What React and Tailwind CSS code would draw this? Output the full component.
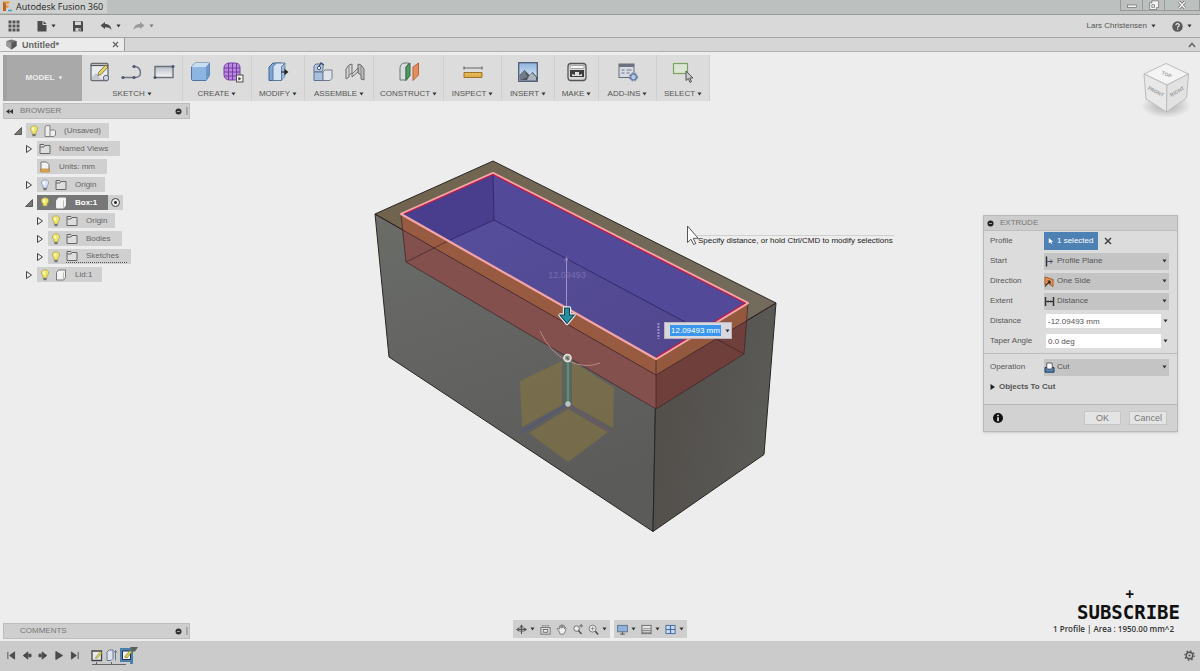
import React from "react";

function Caret({ className = "fill-[#333]" }) {
  return (
    <svg viewBox="0 0 6 5" className={`h-[4px] w-[5px] shrink-0 ${className}`} aria-hidden="true">
      <path d="M0.5 0.5h5L3 4.5z" />
    </svg>
  );
}

function Icon({ size = "h-6 w-6", box = 24, children }) {
  return (
    <svg viewBox={`0 0 ${box} ${box}`} className={`shrink-0 ${size}`} fill="none" aria-hidden="true">
      {children}
    </svg>
  );
}

/* ---------- toolbar icons ---------- */

const icons = {
  sketch: (
    <Icon>
      <rect x="3" y="3.500" width="17" height="17" rx="1" fill="#e9ecef" stroke="#6a6d72" strokeWidth="1.300" />
      <path d="M3 5.500h17" stroke="#555" strokeWidth="1.200" />
      <path d="M4 17l4-4 5 6H4z" fill="#c3c9d1" />
      <path d="M10.500 12.500l7-7.500 2.500 2-7 7.500-3.200 1z" fill="#e3d36d" stroke="#6d6330" strokeWidth=".8" />
      <circle cx="18" cy="18" r="2.700" fill="#cfd4df" stroke="#666b7a" />
    </Icon>
  ),
  line: (
    <Icon>
      <path d="M3 17.500h12c8 0 6.500-10 0-11h-1" stroke="#6f7787" strokeWidth="1.500" />
      <circle cx="3" cy="17.500" r="1.600" fill="#4a5575" />
      <circle cx="14" cy="17.500" r="1.600" fill="#4a5575" />
      <circle cx="14" cy="6.500" r="1.600" fill="#4a5575" />
    </Icon>
  ),
  rect: (
    <Icon>
      <path d="M3 6.500h18v11H3z" fill="url(#silver)" stroke="#6d7078" strokeWidth="1.400" />
      <circle cx="21" cy="6.500" r="1.500" fill="#4a5575" />
      <circle cx="3" cy="17.500" r="1.500" fill="#4a5575" />
    </Icon>
  ),
  box: (
    <Icon>
      <path d="M2.500 7l3.500-4h14.500v12.500L17 20.500H3.500l-1-1z" fill="#8db5e2" stroke="#53749f" strokeWidth="1" />
      <path d="M2.500 7L6 3h14.500L17 7z" fill="#c9def3" />
      <path d="M17 7l3.500-4v12.500L17 20.500z" fill="#6d97ca" />
    </Icon>
  ),
  form: (
    <Icon>
      <path d="M3 8c0-3 2-5 6-5h4c5 0 6 2 6 5v6c0 4-2 6-6 6H9c-4 0-6-2-6-6z" fill="#ba8ae0" stroke="#7540a0" />
      <path d="M3 8h16M3 12h16M3.500 16h15M7.500 3v17M11.500 3v17M15.500 3.500v16" stroke="#70359e" strokeWidth=".9" />
      <rect x="15.500" y="15" width="6.500" height="7" fill="#eee" stroke="#555" />
      <path d="M17.500 17v3.500l2.700-1.800z" fill="#333" />
    </Icon>
  ),
  modify: (
    <Icon>
      <path d="M3 7l4-4h8l-3 3v14.500H3z" fill="#7da6d7" stroke="#46658d" />
      <path d="M7 6.500L10.500 3H19l-3.500 4v13.500H7z" fill="#d2e2f3" stroke="#5c789a" />
      <path d="M15.500 7L19 3v13l-3.500 4.500z" fill="#9bbbdc" stroke="#5c789a" strokeWidth=".7" />
      <path d="M15 12h4M19 10l2.500 2-2.500 2z" stroke="#222" strokeWidth="1.200" fill="#222" />
    </Icon>
  ),
  assembleA: (
    <Icon>
      <path d="M3 6l2-2h7v6l-2 2H3z" fill="#b8c8dd" stroke="#60718c" />
      <path d="M3 12h9v8.500H3z" fill="#a8c1de" stroke="#60718c" />
      <path d="M12 12l2-2h7v8.500l-2 2h-7z" fill="#e1e5eb" stroke="#767b88" />
      <path d="M7 8l3-5 3 2" stroke="#3d5278" strokeWidth="1.300" />
      <circle cx="8" cy="8" r="1.700" fill="#f3f5fa" stroke="#3d5278" />
    </Icon>
  ),
  assembleB: (
    <Icon>
      <path d="M3 19V9l3-4 3-1v9l-3 2v2z" fill="#d4d4d4" stroke="#6c6c6c" />
      <path d="M21 20V9l-3-4-3-1v9l3 2v4z" fill="#bababa" stroke="#6c6c6c" />
      <path d="M9 14l6-6v4l-6 5z" fill="#cfcfcf" stroke="#6c6c6c" strokeWidth=".9" />
      <path d="M6 6v9M18 6v9" stroke="#8a8a8a" />
    </Icon>
  ),
  construct: (
    <Icon>
      <path d="M3 20V8c0-3 2-5 5-5h4l-3 4v13z" fill="#d9dde0" stroke="#70767a" />
      <path d="M9 7l4-4v12.500L9 20.500z" fill="#4f9a62" stroke="#376b45" />
      <path d="M16 7l5.500-4v12L16 20.500z" fill="#e58f60" stroke="#b56439" />
    </Icon>
  ),
  inspect: (
    <Icon>
      <path d="M3 8h18M3 6.500v3M21 6.500v3" stroke="#666" strokeWidth="1.200" />
      <path d="M3 12.500h18v5H3z" fill="#e0ae49" stroke="#9e742a" />
      <path d="M6 13v2M9 13v2M12 13v2M15 13v2M18 13v2" stroke="#f1d18b" strokeWidth=".8" />
    </Icon>
  ),
  insert: (
    <Icon>
      <rect x="2.700" y="2.700" width="18.600" height="18.600" fill="url(#sky)" stroke="#4c5d75" strokeWidth="1.300" />
      <path d="M3.500 15l5-5 5 5 3-3 4.500 5v3.500h-17z" fill="#4c545f" />
      <path d="M8.500 10l3 7-8 3.500V15z" fill="#707b88" />
      <path d="M13 16l3-3 4 4v3h-9z" fill="#abb4bd" />
    </Icon>
  ),
  make: (
    <Icon>
      <rect x="3" y="3.500" width="18" height="17" rx="3" fill="#d8d8d8" stroke="#555" strokeWidth="1.300" />
      <rect x="5" y="5.500" width="14" height="3" rx="1" fill="#f5f5f5" stroke="#777" strokeWidth=".6" />
      <rect x="5" y="10" width="14" height="7" fill="#3d3d3d" />
      <path d="M7 16v-2l3 1v-3h4v3l3-1v2z" fill="#ddd" />
    </Icon>
  ),
  addins: (
    <Icon>
      <rect x="3" y="4" width="15" height="13.500" fill="#d8dbe3" stroke="#666c7a" />
      <path d="M3 4h15v3H3z" fill="#6c7282" />
      <path d="M5.500 10h3M5.500 13h3M10.500 10h5M10.500 13h3" stroke="#737987" strokeWidth="1.200" />
      <circle cx="17.500" cy="17" r="3" fill="#b9c8e3" stroke="#6b80a8" strokeWidth="1.600" />
      <circle cx="17.500" cy="17" r="4.200" stroke="#6b80a8" strokeWidth="1" strokeDasharray="1.500 2" />
    </Icon>
  ),
  select: (
    <Icon>
      <rect x="2.500" y="3.500" width="14" height="10" fill="#dce6d4" stroke="#7ba45f" strokeWidth="1.200" />
      <path d="M15 11v9.500l2.300-2 1.700 4 1.500-.8-1.700-3.700h3z" fill="#ccc" stroke="#444" strokeWidth=".9" />
    </Icon>
  ),
};

const groups = [
  { label: "SKETCH", width: "w-[101px]", icons: ["sketch", "line", "rect"] },
  { label: "CREATE", width: "w-[69px]", icons: ["box", "form"] },
  { label: "MODIFY", width: "w-[53px]", icons: ["modify"] },
  { label: "ASSEMBLE", width: "w-[69px]", icons: ["assembleA", "assembleB"] },
  { label: "CONSTRUCT", width: "w-[70px]", icons: ["construct"] },
  { label: "INSPECT", width: "w-[58px]", icons: ["inspect"] },
  { label: "INSERT", width: "w-[53px]", icons: ["insert"] },
  { label: "MAKE", width: "w-[44px]", icons: ["make"] },
  { label: "ADD-INS", width: "w-[58px]", icons: ["addins"] },
  { label: "SELECT", width: "w-[53px]", icons: ["select"] },
];

function Toolbar() {
  return (
    <nav aria-label="Commands" className="flex h-[46px] pl-[3px] text-[8px] leading-[10px] text-[#555]">
      <button className="flex w-[79px] shrink-0 items-center justify-center gap-1 border-l-4 border-[#a0a0a0] bg-[#a9a9a9] font-bold text-[#eee]">
        MODEL <Caret className="fill-[#eee]" />
      </button>
      {groups.map((g) => (
        <div key={g.label} className={`flex shrink-0 flex-col items-center justify-between border-r border-[#cfcfcf] bg-[#dcdcdc] pt-[5px] pb-[2px] ${g.width}`}>
          <div className="flex gap-2">
            {g.icons.map((name) => (
              <button key={name} aria-label={`${g.label} ${name}`}>{icons[name]}</button>
            ))}
          </div>
          <button className="flex items-center gap-[2px]">{g.label} <Caret /></button>
        </div>
      ))}
    </nav>
  );
}

/* ---------- window header ---------- */

function Header() {
  return (
    <header>
      <div className="flex h-[15px] items-start justify-between border-b border-[#9a9c9b] bg-[#bcc0be]">
        <div className="flex items-center gap-[3px] bg-[#cfd1d0] pr-1 pl-[2px]">
          <Icon size="h-[11px] w-[11px]" box={11}>
            <path d="M1 0.500h7L6.500 3H4v1.500h3L6 6.800H4V10H1z" fill="#e9953b" />
            <path d="M1 0.500L4 3v7H1z" fill="#b9661f" />
            <path d="M6 9.500h4" stroke="#36a3cc" strokeWidth="1.500" />
          </Icon>
          <h1 className="font-['Open_Sans','Noto_Sans',sans-serif] text-[9px] leading-[13px] text-[#222]">Autodesk Fusion 360</h1>
        </div>
        <div className="flex h-[11px] divide-x divide-[#999] border-x border-b border-[#999]">
          <button aria-label="Minimize" className="flex w-[22px] items-center justify-center">
            <Icon size="h-[10px] w-3" box={12}><rect x="0.500" y="6" width="11" height="3" fill="#f4f4f4" stroke="#666" strokeWidth=".8" /></Icon>
          </button>
          <button aria-label="Restore" className="flex w-[22px] items-center justify-center">
            <Icon size="h-[10px] w-3" box={12}><path d="M3.500 1h8v8H9v2.400H.8V3.300h2.700z" fill="#f4f4f4" stroke="#666" strokeWidth=".8" /><rect x="3.500" y="5.700" width="3" height="3" stroke="#666" strokeWidth=".9" /></Icon>
          </button>
          <button aria-label="Close" className="flex w-[34px] items-center justify-center">
            <Icon size="h-[10px] w-3" box={12}><path d="M2.500 2l7 8M9.500 2l-7 8" stroke="#666" strokeWidth="3.400" /><path d="M2.500 2l7 8M9.500 2l-7 8" stroke="#f4f4f4" strokeWidth="1.800" /></Icon>
          </button>
        </div>
      </div>

      <div className="flex h-[23px] items-center justify-between border-b border-[#a5a5a5] bg-[#d9d9d9] pr-2 pl-2 text-[8px] text-[#555]">
        <div className="flex items-center">
          <button aria-label="Data panel" className="mr-4">
            <Icon size="h-3 w-3" box={12}><path d="M.5.500h3v3h-3zM4.500.500h3v3h-3zM8.500.500h3v3h-3zM.5 4.500h3v3h-3zM4.500 4.500h3v3h-3zM8.500 4.500h3v3h-3zM.5 8.500h3v3h-3zM4.500 8.500h3v3h-3zM8.500 8.500h3v3h-3z" fill="#555" /></Icon>
          </button>
          <button aria-label="File" className="mr-4 flex items-center gap-[3px]">
            <Icon size="h-3 w-3" box={12}><path d="M1.500 1h5v4H10.500v6.500h-9z" fill="#4c4c4c" /><path d="M7.500 1l3 3h-3z" fill="#4c4c4c" /></Icon>
            <Caret />
          </button>
          <button aria-label="Save" className="mr-4">
            <Icon size="h-3 w-3" box={12}><path d="M1 1h9l1 1v9.500H1z" fill="#4c4c4c" /><path d="M3 1.500h6V5H3zM3.500 8h5v3.500h-5z" fill="#d9d9d9" /><path d="M6.500 8.500h1.200v2.500H6.500z" fill="#4c4c4c" /></Icon>
          </button>
          <button aria-label="Undo" className="mr-3 flex items-center gap-1">
            <Icon size="h-3 w-3" box={12}><path d="M.5 5.500L5 2v2c4 0 6 2 6.500 6-1.500-2-3-2.700-6.500-2.700V9z" fill="#4c4c4c" /></Icon>
            <Caret />
          </button>
          <button aria-label="Redo" className="flex items-center gap-1">
            <Icon size="h-3 w-3" box={12}><path d="M11.500 5.500L7 2v2C3 4 1 6 .5 10 2 8 3.500 7.300 7 7.300V9z" fill="#999" /></Icon>
            <Caret className="fill-[#777]" />
          </button>
        </div>
        <div className="flex items-center gap-4">
          <button className="flex items-center gap-1">Lars Christensen <Caret /></button>
          <button aria-label="Help" className="flex items-center gap-1">
            <svg viewBox="0 0 12 12" className="h-[11px] w-[11px]" aria-hidden="true"><circle cx="6" cy="6" r="5.700" fill="#5b5b5b" /><path d="M4.200 4.700c0-2.500 3.700-2.400 3.700-.2 0 1.300-1.800 1.300-1.800 2.800M6.100 8.300v1.300" fill="none" stroke="#eee" strokeWidth="1.300" /></svg>
            <Caret />
          </button>
        </div>
      </div>

      <div className="flex h-[14px] items-stretch justify-between border-b border-[#b0b0b0] bg-[#d6d6d6] pr-1">
        <div className="flex w-[125px] items-center border-r border-[#999] bg-[#ebebeb] pl-[6px]">
          <Icon size="h-[11px] w-[11px]" box={11}><path d="M.5 2l5-1.500 5 1.500v5l-5 3.500-5-3.500z" fill="#777" /><path d="M.5 2l5 2v6.500L.5 7z" fill="#999" /><path d="M5.500 4l5-2v5l-5 3.500z" fill="#555" /></Icon>
          <span className="ml-[5px] flex-1 text-[9px] leading-3 font-bold text-[#666]">Untitled*</span>
          <button aria-label="Close tab" className="mr-[5px]">
            <Icon size="h-[7px] w-[7px]" box={7}><path d="M1 1l5 5M6 1L1 6" stroke="#666" strokeWidth="1.300" /></Icon>
          </button>
        </div>
        <button aria-label="Collapse toolbar">
          <Icon size="h-2 w-2" box={8}><path d="M1 6l3-3.500L7 6" stroke="#666" strokeWidth="1.500" /></Icon>
        </button>
      </div>
    </header>
  );
}

/* ---------- browser tree ---------- */

function Bulb({ off }) {
  return (
    <Icon size="h-3 w-3" box={12}>
      <path d="M6 .8c4.300 0 4.300 4 2 6V9H4V6.800c-2.300-2-2.300-6 2-6z" fill={off ? "#dfe5f5" : "#f1e766"} stroke={off ? "#8590b0" : "#aaa25a"} strokeWidth=".8" />
      <path d="M4.300 9h3.400v2.200H4.300z" fill="#777" />
      <path d="M5 2.500v3" stroke="#fff" strokeWidth="1.200" />
    </Icon>
  );
}

function Glyph({ kind }) {
  if (kind === "folder")
    return <Icon size="h-3 w-3" box={12}><path d="M1 1.500h4l1 1h5v8H1z" fill="#dedede" stroke="#666" /><path d="M1 4h4l1-1.500" stroke="#666" /></Icon>;
  if (kind === "units")
    return <Icon size="h-3 w-3" box={12}><path d="M2 1h5.500L10 3.500V9H2z" fill="#f3f3f3" stroke="#777" /><path d="M1.500 8h9v3h-9z" fill="#e0a64e" stroke="#a87832" strokeWidth=".6" /></Icon>;
  if (kind === "assembly")
    return <Icon size="h-3 w-3" box={12}><path d="M1 2l1.500-1.300H6V5h4.500l1 1v4l-1.500 1.500H1z" fill="#eee" stroke="#777" strokeWidth=".9" /><path d="M6 5v6" stroke="#777" strokeWidth=".9" /></Icon>;
  return <Icon size="h-3 w-3" box={12}><path d="M1.500 3.500L3.500 1h7v7.500l-2 2.500h-7z" fill="#f4f4f4" stroke={kind === "activeBody" ? "#eee" : "#777"} /><path d="M8.500 3.500v7" stroke="#bbb" /></Icon>;
}

function Expander({ state }) {
  if (state === "none") return <span className="w-2" />;
  return (
    <button aria-label={state === "open" ? "Collapse" : "Expand"} className="w-2">
      <Icon size="h-2 w-2" box={8}>
        {state === "open" ? <path d="M7.500.500v7H.5z" fill="#777" stroke="#444" strokeWidth=".8" /> : <path d="M1.500.500v7L6.500 4z" fill="#eee" stroke="#444" />}
      </Icon>
    </button>
  );
}

const tree = [
  { label: "(Unsaved)", indent: "pl-[14px]", state: "open", bulb: "on", kind: "assembly", width: "w-[83px]" },
  { label: "Named Views", indent: "pl-[25px]", state: "closed", kind: "folder", width: "w-[83px]" },
  { label: "Units: mm", indent: "pl-[25px]", state: "none", kind: "units", width: "w-[70px]" },
  { label: "Origin", indent: "pl-[25px]", state: "closed", bulb: "off", kind: "folder", width: "w-[68px]" },
  { label: "Box:1", indent: "pl-[25px]", state: "open", bulb: "on", kind: "activeBody", width: "w-[71px]", active: true },
  { label: "Origin", indent: "pl-[36px]", state: "closed", bulb: "on", kind: "folder", width: "w-[67px]" },
  { label: "Bodies", indent: "pl-[36px]", state: "closed", bulb: "on", kind: "folder", width: "w-[74px]" },
  { label: "Sketches", indent: "pl-[36px]", state: "closed", bulb: "on", kind: "folder", width: "w-[83px]", dotted: true },
  { label: "Lid:1", indent: "pl-[25px]", state: "closed", bulb: "on", kind: "body", width: "w-[65px]" },
];

function PanelBar({ title, collapse }) {
  return (
    <div className="ml-[3px] flex h-4 w-[187px] items-center border border-[#bdbdbd] bg-[#cfcfcf] text-[8px] text-[#777]">
      <span className="flex w-4 items-center pl-[2px]">
        {collapse && <Icon size="h-[7px] w-[7px]" box={7}><path d="M3.500 1v5L0 3.500zM7 1v5L3.500 3.500z" fill="#333" /></Icon>}
      </span>
      <h2 className="flex-1 leading-[10px]">{title}</h2>
      <button aria-label={`${title} options`} className="mr-1">
        <Icon size="h-[7px] w-[7px]" box={7}><circle cx="3.500" cy="3.500" r="3" fill="#333" /><path d="M2 3.500h3" stroke="#bbb" strokeWidth=".8" /></Icon>
      </button>
      <span className="mr-[1px] h-2 w-[2px] bg-[#a8a8a8]" />
    </div>
  );
}

function Browser() {
  return (
    <section className="w-[190px]">
      <PanelBar title="BROWSER" collapse />
      <ul className="mt-1 flex flex-col gap-[3px] text-[8px] leading-[10px] text-[#666]">
        {tree.map((n, i) => (
          <li key={i} className={`flex h-[15px] items-center gap-1 ${n.indent}`}>
            <Expander state={n.state} />
            <div className="flex h-full">
              <div className={`flex items-center gap-1 pr-1 pl-[2px] ${n.width} ${n.active ? "bg-[#777] font-bold text-white" : "bg-[#d0d0d0]"}`}>
                {n.bulb && <Bulb off={n.bulb === "off"} />}
                <span className={`flex flex-1 items-center gap-2 ${n.dotted ? "border-b border-dotted border-[#555]" : ""}`}>
                  <Glyph kind={n.kind} />
                  <span className="whitespace-nowrap">{n.label}</span>
                </span>
              </div>
              {n.active && (
                <label className="flex w-[15px] items-center justify-center bg-[#d0d0d0]">
                  <input type="radio" name="active" defaultChecked aria-label="Activate component" className="h-[9px] w-[9px] appearance-none rounded-full border border-[#444] bg-[radial-gradient(circle,#333_0_1px,#eee_2px)]" />
                </label>
              )}
            </div>
          </li>
        ))}
      </ul>
    </section>
  );
}

/* ---------- extrude dialog ---------- */

const fieldIcons = {
  plane: <Icon size="h-[11px] w-[11px]" box={11}><path d="M2.500 .5v10" stroke="#333" strokeWidth="1.500" /><path d="M3 5.500h6M7 3.500v4" stroke="#44566f" /></Icon>,
  side: <Icon size="h-[11px] w-[11px]" box={11}><path d="M1 1l8 2.500v7L4 7 1 9z" fill="#e8955b" stroke="#a95723" /><path d="M1 10.500L6 5M6 5v3M6 5H3.500" stroke="#222" strokeWidth="1.100" /></Icon>,
  extent: <Icon size="h-[11px] w-[11px]" box={11}><path d="M1.500 1v9M9.500 1v9" stroke="#333" strokeWidth="1.500" /><path d="M2 5.500h7" stroke="#333" /><path d="M2.500 5.500l2-1.500v3zM8.500 5.500l-2-1.500v3z" fill="#333" /></Icon>,
  cut: <Icon size="h-[11px] w-[11px]" box={11}><path d="M1 5.500h9v4.700H1z" fill="#5586bb" stroke="#223a59" /><path d="M2.800 1h5.400v6H2.800z" fill="#fafafa" stroke="#444" strokeWidth=".8" /></Icon>,
};

function SelectRow({ id, label, icon, value }) {
  return (
    <div className="flex h-5 items-center">
      <label htmlFor={id} className="w-[54px]">{label}</label>
      <div className="flex h-[17px] flex-1 items-center gap-[2px] bg-[#c4c4c4] pr-[2px]">
        {fieldIcons[icon]}
        <select id={id} className="h-full min-w-0 flex-1 appearance-none bg-transparent">
          <option>{value}</option>
        </select>
        <Caret />
      </div>
    </div>
  );
}

function InputRow({ id, label, value }) {
  return (
    <div className="flex h-5 items-center">
      <label htmlFor={id} className="w-[56px]">{label}</label>
      <input id={id} defaultValue={value} className="h-[14px] min-w-0 flex-1 bg-white pl-[2px]" />
      <button aria-label={`${label} options`} className="pr-[1px] pl-[2px]"><Caret /></button>
    </div>
  );
}

function ExtrudePanel() {
  return (
    <section aria-label="Extrude" className="mr-[22px] w-[195px] border border-[#b9b9b9] bg-[#dcdcdc] text-[8px] leading-[10px] text-[#555] shadow-sm">
      <div className="flex h-[15px] items-center gap-[6px] border-b border-[#bdbdbd] bg-[#cdcdcd] pl-[3px] text-[#777]">
        <Icon size="h-[7px] w-[7px]" box={7}><circle cx="3.500" cy="3.500" r="3" fill="#222" /><path d="M2 3.500h3" stroke="#bbb" strokeWidth=".8" /></Icon>
        <h2>EXTRUDE</h2>
      </div>
      <div className="pr-2 pl-[6px]">
        <div className="flex h-5 items-center">
          <span className="w-[54px]">Profile</span>
          <button className="flex h-[18px] w-[54px] items-center gap-[3px] bg-[#4d81b3] pl-1 whitespace-nowrap text-white">
            <Icon size="h-2 w-[6px]" box={8}><path d="M1 0v7l2-1.500L4.500 8l1-.6L4.300 5H7z" fill="#fff" /></Icon>
            1 selected
          </button>
          <button aria-label="Clear selection" className="ml-[6px]">
            <Icon size="h-2 w-2" box={8}><path d="M1 1l6 6M7 1L1 7" stroke="#444" strokeWidth="1.500" /></Icon>
          </button>
        </div>
        <SelectRow id="start" label="Start" icon="plane" value="Profile Plane" />
        <SelectRow id="direction" label="Direction" icon="side" value="One Side" />
        <SelectRow id="extent" label="Extent" icon="extent" value="Distance" />
        <InputRow id="distance" label="Distance" value="-12.09493 mm" />
        <InputRow id="taper" label="Taper Angle" value="0.0 deg" />
      </div>
      <div className="mt-[2px] border-t border-[#bcbcbc] pt-[3px] pr-2 pl-[6px]">
        <SelectRow id="operation" label="Operation" icon="cut" value="Cut" />
        <button className="flex h-5 items-center gap-[3px] font-bold">
          <Icon size="h-2 w-[6px]" box={6}><path d="M.5 0v6L5 3z" fill="#222" /></Icon>
          Objects To Cut
        </button>
      </div>
      <div className="mt-[7px] flex h-[27px] items-center border-t border-[#b5b5b5] bg-[#d2d2d2] pr-[10px] pl-[9px] text-[9px] text-[#777]">
        <button aria-label="Information" className="mr-auto">
          <Icon size="h-[10px] w-[10px]" box={10}><circle cx="5" cy="5" r="5" fill="#111" /><path d="M5 4.300v4M5 1.700v1.500" stroke="#fff" strokeWidth="1.500" /></Icon>
        </button>
        <button className="h-[14px] w-[37px] border border-[#c6c6c6] bg-[#e4e4e4]">OK</button>
        <button className="ml-2 h-[14px] w-[38px] border border-[#c6c6c6] bg-[#e4e4e4]">Cancel</button>
      </div>
    </section>
  );
}

/* ---------- model ---------- */

function Model() {
  return (
    <div className="absolute top-[53px] left-[370px] h-[385px] w-[540px]">
      <svg viewBox="370 154 540 385" className="h-full w-full" role="img" aria-label="Box body with extruded cut">
        <defs>
          <linearGradient id="silver" x1="0" y1="0" x2="0" y2="1"><stop stopColor="#b9bdc5" /><stop offset="1" stopColor="#f4f5f7" /></linearGradient>
          <linearGradient id="sky" x1="0" y1="0" x2="0" y2="1"><stop stopColor="#8db4df" /><stop offset="1" stopColor="#e9f1f8" /></linearGradient>
          <linearGradient id="left" x1="0" y1="0" x2="0.300" y2="1"><stop stopColor="#6a6c68" /><stop offset="0.500" stopColor="#636462" /><stop offset="1" stopColor="#5b5b59" /></linearGradient>
          <linearGradient id="right" x1="0" y1="0" x2="1" y2="0.300"><stop stopColor="#514c48" /><stop offset="1" stopColor="#5a5a57" /></linearGradient>
          <linearGradient id="rim" x1="0" y1="0" x2="1" y2="0"><stop stopColor="#71634e" /><stop offset="1" stopColor="#736b5c" /></linearGradient>
          <linearGradient id="floor" x1="0" y1="0" x2="1" y2="1"><stop stopColor="#5750a0" /><stop offset="1" stopColor="#51468c" /></linearGradient>
        </defs>
        <g stroke="#292724" strokeWidth="1" strokeLinejoin="round">
          <path d="M375 214L656 375L653 531.500L389 357Z" fill="url(#left)" />
          <path d="M656 375L776 303L764 454.500L653 531.500Z" fill="url(#right)" />
          <path d="M375 214L493 161L776 303L656 375Z" fill="url(#rim)" />
        </g>
        <path d="M402 229.500L656 375V409L406 262Z" fill="#83504d" />
        <path d="M656 375L747 320.500L744 354L656 409Z" fill="#6f3f3b" />
        <path d="M401 214L656 359V375L402 229.500Z" fill="#985a41" />
        <path d="M656 359L748 303L747 320.500L656 375Z" fill="#94583f" />
        <path d="M401 214L493 173L748 303L656 359Z" fill="url(#floor)" />
        <path d="M401 214L493 173L494 220L448 241Z" fill="#493e8e" />
        <path d="M493 173L748 303L729 315L700 330L494 220Z" fill="#524999" />
        <g stroke="#3b2028" strokeWidth=".9" fill="none" opacity=".75">
          <path d="M401 214L406 262L656 409L744 354L748 303M656 359V409" />
          <path d="M375 214L402 229.500L656 375L747 320.500L776 303" />
          <path d="M406 262L448 241M700 330L744 354" />
        </g>
        <path d="M493 173L494 220L700 330M494 220L448 241" stroke="#2f2768" strokeWidth=".9" fill="none" />
        <path d="M401 214L493 173L748 303L656 359Z" fill="none" stroke="#f4a5a8" strokeWidth="2.200" strokeLinejoin="round" />
        <path d="M404 214L493 174.500L745 303L656 357.500" fill="none" stroke="#c01d45" strokeWidth="1.300" />

        <g fill="#8f7a3c" opacity=".5">
          <path d="M520 381L562 361V405L522 427Z" />
          <path d="M572 361L614 388L613 428L572 405Z" />
          <path d="M529 433L568 409L608 432L568 462Z" />
        </g>
        <path d="M568 404L520 433" stroke="#55567a" strokeWidth="1.800" />
        <path d="M568 404L612 433" stroke="#6b5968" strokeWidth="1.800" />
        <path d="M568 362V402" stroke="#4c7361" strokeWidth="5" />
        <path d="M568 362V402" stroke="#6f9081" strokeWidth="1.500" />
        <circle cx="568" cy="404" r="2.700" fill="#b9c6bd" />
        <path d="M540 331Q550 353 568 361T600 363" fill="none" stroke="#b78884" strokeWidth="1" />
        <circle cx="567.500" cy="358" r="3.500" fill="#9a9a90" stroke="#e8e8e2" strokeWidth="1.600" />
        <path d="M566.500 357l2 2.500" stroke="#444" strokeWidth="1.200" />
        <path d="M566.500 258V308" stroke="#a38fcb" />
        <path d="M564.500 260.500l2-4 2 4z" fill="#9184bf" />
        <text x="567" y="278" textAnchor="middle" className="font-['Liberation_Sans',sans-serif] text-[9px]" fill="#776db0">12.09493</text>
        <path d="M564.500 308h5v7h4.500L567 323.500L560 315h4.500z" fill="#1d8093" stroke="#e7f3f2" strokeWidth="3.400" strokeLinejoin="round" />
        <path d="M564.500 308h5v7h4.500L567 323.500L560 315h4.500z" fill="#2391a3" stroke="#173e4d" strokeWidth="1.100" />
        <path d="M658.500 323V339" stroke="#9a8fc5" strokeWidth="2" strokeDasharray="2 1" />
        <path d="M697 235.500H894" stroke="#d0d0d0" />
        <path d="M687.500 226v16.500l3.500-3.300 2.600 5.300 2.200-1-2.600-5.200h5z" fill="#fff" stroke="#555" />
      </svg>
      <div className="absolute top-[168px] left-[294px] flex h-[17px] w-[68px] items-center gap-1 border border-[#b9b4bd] bg-[#d9d6dc] pl-[5px]">
        <input aria-label="Distance" defaultValue="12.09493 mm" className="h-[11px] w-[51px] bg-[#3b97ee] text-center text-[8px] text-white" />
        <Caret />
      </div>
      <p className="absolute top-[82px] left-[328px] font-['Liberation_Sans',sans-serif] text-[8px] leading-[10px] whitespace-nowrap text-[#222]">
        Specify distance, or hold Ctrl/CMD to modify selections
      </p>
    </div>
  );
}

function ViewCube() {
  return (
    <svg viewBox="0 0 56 60" className="absolute top-[-42px] right-[6px] h-[60px] w-[56px]" role="img" aria-label="View cube">
      <defs>
        <radialGradient id="cubeShadow"><stop stopColor="#aaa" /><stop offset="1" stopColor="#aaa" stopOpacity="0" /></radialGradient>
      </defs>
      <ellipse cx="28" cy="47" rx="25" ry="12" fill="url(#cubeShadow)" />
      <g stroke="#bcbcbc" strokeLinejoin="round">
        <path d="M6 15L28 4.500L50.500 15L29 26Z" fill="#f4f4f4" />
        <path d="M6 15L29 26L28.500 53L8 40Z" fill="#e8e8e8" />
        <path d="M29 26L50.500 15L48.500 39L28.500 53Z" fill="#e2e2e2" />
      </g>
      <g className="font-['Liberation_Sans',sans-serif] text-[5px] font-bold" fill="#9c9c9c" textAnchor="middle">
        <text transform="translate(28 17) rotate(22)">TOP</text>
        <text transform="translate(17 34) rotate(28)">FRONT</text>
        <text transform="translate(40 34) rotate(-30)">RIGHT</text>
      </g>
    </svg>
  );
}

/* ---------- bottom bars ---------- */

const navTools = [
  { name: "Orbit", caret: true, art: <><path d="M1 6h10M6 1v10" stroke="#555" strokeWidth="1.200" /><ellipse cx="6" cy="6" rx="4.500" ry="2" stroke="#666" /><path d="M4 3l2-2.500L8 3zM9 4l3 2-3 2zM3 4L0 6l3 2z" fill="#555" /></> },
  { name: "Look at", art: <><rect x="1" y="4" width="10" height="7" fill="#eee" stroke="#666" /><path d="M2 2h8" stroke="#666" strokeDasharray="2 1" /><rect x="3.500" y="6" width="5" height="3" stroke="#666" /></> },
  { name: "Pan", art: <path d="M3 7L1 5.500l1-1 2 1V2l1-.5.700 3V1l1.200-.2.500 3.500.700-3 1 .4v3.600l1-1.700.9.700-1 4.200L8.500 11h-4z" fill="#eee" stroke="#666" strokeWidth=".8" /> },
  { name: "Zoom", art: <><circle cx="5" cy="5" r="3" fill="#eee" stroke="#666" /><path d="M7 7l3.500 4" stroke="#555" strokeWidth="1.600" /><path d="M8 2h4M10 0v4" stroke="#666" /></> },
  { name: "Fit", caret: true, art: <><circle cx="5" cy="5" r="3.800" fill="#eee" stroke="#777" /><path d="M3 5h4M5 3v4" stroke="#888" /><path d="M8 8l3 3.500" stroke="#555" strokeWidth="1.800" /></> },
];
const viewTools = [
  { name: "Display settings", caret: true, art: <><rect x=".7" y="1.500" width="10.600" height="7" fill="#8fb2dc" stroke="#59718f" /><path d="M6 8.500v2M3.500 11h5" stroke="#666" strokeWidth="1.200" /></> },
  { name: "Grid settings", caret: true, art: <><rect x="1" y="1.500" width="10" height="9" fill="#e4e4e4" stroke="#666" /><path d="M1 7h10M1 9h10" stroke="#777" /><path d="M1 5h10" stroke="#999" /></> },
  { name: "Viewports", caret: true, art: <><rect x="1" y="1.500" width="10" height="9" fill="#c6dbf3" stroke="#47699a" /><path d="M6 1.500v9M1 6h10" stroke="#47699a" strokeWidth="1.300" /></> },
];

function NavGroup({ tools }) {
  return (
    <div className="flex h-[18px] items-center gap-[5px] bg-[#cfcfcf] px-[3px]">
      {tools.map((t) => (
        <button key={t.name} aria-label={t.name} className="flex items-center gap-[3px]">
          <Icon size="h-[11px] w-[11px]" box={12}>{t.art}</Icon>
          {t.caret && <Caret />}
        </button>
      ))}
    </div>
  );
}

const playback = [
  { name: "Go to start", d: "M1.500 1v8M9 1v8L3.500 5z" },
  { name: "Step back", d: "M6 1v8L.8 5zM7 3.500h2.500v3H7z" },
  { name: "Step forward", d: "M4 1v8l5.200-4zM.5 3.500H3v3H.5z" },
  { name: "Play", d: "M1.500.500v9L9 5z" },
  { name: "Go to end", d: "M1 1v8l5.500-4zM8.500 1v8" },
];

function Timeline() {
  return (
    <footer className="flex h-[30px] items-center bg-[#cbcbcb] pr-[5px] pb-[2px] pl-[6px]">
      <div className="flex gap-[6px]">
        {playback.map((p) => (
          <button key={p.name} aria-label={p.name}>
            <Icon size="h-[9px] w-[10px]" box={10}><path d={p.d} fill="#4a4a4a" stroke="#4a4a4a" strokeWidth="1" /></Icon>
          </button>
        ))}
      </div>
      <svg viewBox="0 0 50 24" className="ml-2 h-6 w-[50px]" role="img" aria-label="Timeline features">
        <path d="M4 21.500H38M8.500 19v3M23.500 19v3" stroke="#666" fill="none" />
        <path d="M4 8h9.500v9.500H4z" fill="#e9e9e9" stroke="#444" strokeWidth="1.300" />
        <path d="M7 15l5.500-6.500 1.500 1.500-5 5.500z" fill="#d9d23e" stroke="#777" strokeWidth=".5" />
        <path d="M19 9l2-2h4v8.500l-2 2h-4z" fill="#dde3ec" stroke="#6c7890" />
        <path d="M27.500 7.500v10M26 9.500l1.500-2 1.500 2" stroke="#6c7890" fill="none" />
        <path d="M32 5h13v16h-3v-2H32z" fill="#4c7fae" />
        <path d="M34.500 8h8v8.500h-8z" fill="#f1f1f1" stroke="#234" />
        <path d="M36.500 14l5.500-6.500 2 1.500-5 6z" fill="#d9d23e" stroke="#555" strokeWidth=".5" />
        <path d="M42 4h8l-3 4.500h-3z" fill="#5a6258" />
      </svg>
      <button aria-label="Timeline settings" className="ml-auto">
        <Icon size="h-[11px] w-[11px]" box={12}>
          <circle cx="6" cy="6" r="3.500" stroke="#555" strokeWidth="1.500" />
          <circle cx="6" cy="6" r="5" stroke="#555" strokeWidth="1.500" strokeDasharray="1.800 2.100" />
          <circle cx="6" cy="6" r="1.200" fill="#555" />
        </Icon>
      </button>
    </footer>
  );
}

export default function App() {
  return (
    <div className="flex min-h-screen flex-col overflow-hidden bg-[#ededed] font-['Liberation_Sans',Arial,sans-serif]">
      <Header />
      <div className="pt-[3px]"><Toolbar /></div>
      <main className="relative flex flex-1 items-stretch justify-between">
        <Model />
        <ViewCube />
        <div className="relative flex flex-1 flex-col justify-between pt-[2px] pb-[2px]">
          <Browser />
          <PanelBar title="COMMENTS" />
        </div>
        <div className="relative flex gap-1 self-end pb-[3px]">
          <NavGroup tools={navTools} />
          <NavGroup tools={viewTools} />
        </div>
        <div className="relative flex flex-1 flex-col items-end justify-between pt-[114px] pb-[6px]">
          <ExtrudePanel />
          <div className="flex flex-col items-end pr-5 text-[#111]">
            <span className="mr-[46px] font-['DejaVu_Sans_Mono',monospace] text-[14px] leading-[14px] font-bold">+</span>
            <strong className="font-['DejaVu_Sans_Mono',monospace] text-[19px] leading-[22px]">SUBSCRIBE</strong>
            <p className="mr-[6px] font-['Open_Sans','Noto_Sans',sans-serif] text-[8px] leading-3 font-semibold text-[#333]">1 Profile | Area : 1950.00 mm^2</p>
          </div>
        </div>
      </main>
      <Timeline />
    </div>
  );
}
